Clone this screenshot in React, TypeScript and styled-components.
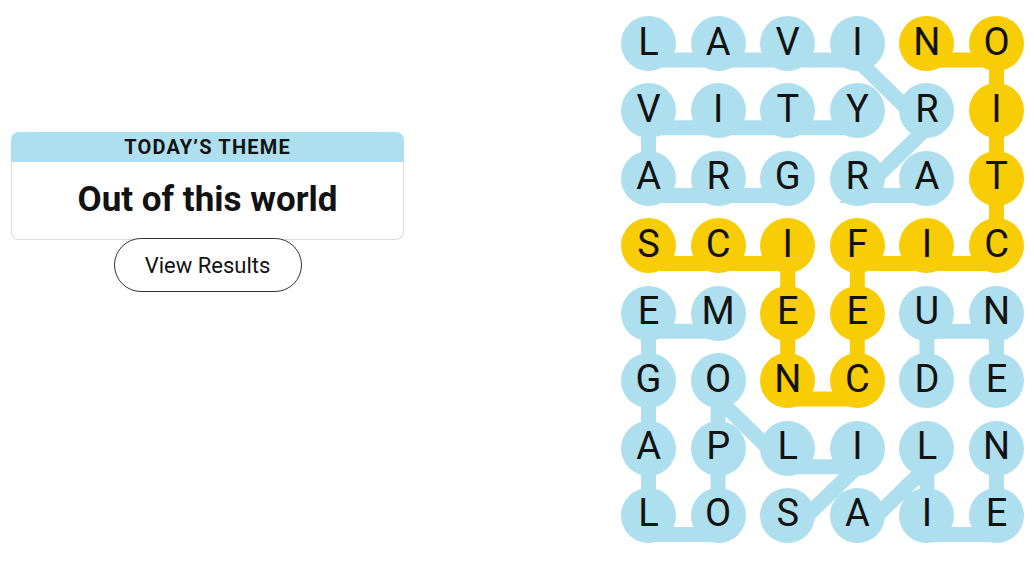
import React from 'react';
import styled, { createGlobalStyle } from 'styled-components';

const BLUE = '#aedfee';
const YELLOW = '#f8cd05';
const INK = '#121212';

const GlobalStyle = createGlobalStyle`
  html, body {
    margin: 0;
    padding: 0;
    background: #ffffff;
    font-family: Roboto, "Liberation Sans", sans-serif;
    color: ${INK};
  }
`;

/*** PAGE ***/
const Page = styled.main`
  width: 1034px;
  height: 582px;
  box-sizing: border-box;
  display: flex;
  justify-content: space-between;
  align-items: flex-start;
  padding: 16px 10px 0 11px;
`;

/*** THEME PANEL ***/
const ThemePanel = styled.section`
  width: 393px;
  display: flex;
  flex-direction: column;
  align-items: center;
  padding-top: 116px;
`;

const ThemeCard = styled.div`
  width: 100%;
  display: flex;
  flex-direction: column;
`;

const ThemeHeader = styled.h2`
  margin: 0;
  height: 30px;
  display: flex;
  align-items: center;
  justify-content: center;
  background: ${BLUE};
  border-radius: 8px 8px 0 0;
  font-size: 20px;
  font-weight: 700;
  letter-spacing: 1.2px;
  text-transform: uppercase;
`;

const ThemeBody = styled.div`
  height: 78px;
  display: flex;
  align-items: center;
  justify-content: center;
  padding-bottom: 3px;
  box-sizing: border-box;
  border: 1px solid #dcdcdc;
  border-top: none;
  border-radius: 0 0 8px 8px;
  font-size: 35px;
  font-weight: 700;
`;

const ResultsButton = styled.button`
  margin-top: -2px;
  width: 188px;
  height: 54px;
  border: 1px solid #333333;
  border-radius: 27px;
  background: #ffffff;
  color: ${INK};
  font-family: Roboto, "Liberation Sans", sans-serif;
  font-size: 22px;
  cursor: pointer;
  position: relative;
`;

/*** BOARD ***/
const Board = styled.div`
  position: relative;
  display: grid;
  grid-template-columns: repeat(6, 55px);
  grid-auto-rows: 55px;
  column-gap: 14.6px;
  row-gap: 12.43px;
`;

const Links = styled.svg`
  position: absolute;
  left: 0;
  top: 0;
  width: 403px;
  height: 527px;
  pointer-events: none;
`;

const Cell = styled.div<{ $found: 'spangram' | 'word' }>`
  position: relative;
  width: 55px;
  height: 55px;
  box-sizing: border-box;
  border-radius: 50%;
  background: ${(p) => (p.$found === 'spangram' ? YELLOW : BLUE)};
  display: flex;
  align-items: center;
  justify-content: center;
  padding-bottom: 4px;
  font-size: 38px;
  line-height: 1;
`;

const LETTERS = [
  'LAVINO',
  'VITYRI',
  'ARGRAT',
  'SCIFIC',
  'EMEEUN',
  'GONCDE',
  'APLILN',
  'LOSAIE',
];

type Pos = [number, number];

const SPANGRAM: Pos[] = [
  [3, 0], [3, 1], [3, 2], [4, 2], [5, 2], [5, 3], [4, 3],
  [3, 3], [3, 4], [3, 5], [2, 5], [1, 5], [0, 5], [0, 4],
];

const WORDS: Pos[][] = [
  [[2, 2], [2, 1], [2, 0], [1, 0], [1, 1], [1, 2], [1, 3]],
  [[2, 4], [2, 3], [1, 4], [0, 3], [0, 2], [0, 1], [0, 0]],
  [[5, 4], [4, 4], [4, 5], [5, 5]],
  [[7, 3], [6, 4], [7, 4], [7, 5], [6, 5]],
  [[4, 1], [4, 0], [5, 0], [6, 0], [7, 0], [7, 1], [6, 1], [5, 1], [6, 2], [6, 3], [7, 2]],
];

const inSpangram = (r: number, c: number) =>
  SPANGRAM.some(([pr, pc]) => pr === r && pc === c);

// connectors sit a little below the circle centres
const toPoints = (path: Pos[]) =>
  path.map(([r, c]) => `${27.5 + c * 69.6},${44 + r * 67.8}`).join(' ');

export default function App() {
  return (
    <>
      <GlobalStyle />
      <Page>
        <ThemePanel>
          <ThemeCard>
            <ThemeHeader>Today’s Theme</ThemeHeader>
            <ThemeBody>Out of this world</ThemeBody>
          </ThemeCard>
          <ResultsButton>View Results</ResultsButton>
        </ThemePanel>

        <Board>
          <Links viewBox="0 0 403 527">
            {WORDS.map((w, i) => (
              <polyline
                key={i}
                points={toPoints(w)}
                fill="none"
                stroke={BLUE}
                strokeWidth={15}
                strokeLinejoin="miter"
              />
            ))}
            <polyline
              points={toPoints(SPANGRAM)}
              fill="none"
              stroke={YELLOW}
              strokeWidth={15}
              strokeLinejoin="miter"
            />
          </Links>
          {LETTERS.map((row, r) =>
            row.split('').map((ch, c) => (
              <Cell key={`${r}-${c}`} $found={inSpangram(r, c) ? 'spangram' : 'word'}>
                {ch}
              </Cell>
            ))
          )}
        </Board>
      </Page>
    </>
  );
}
